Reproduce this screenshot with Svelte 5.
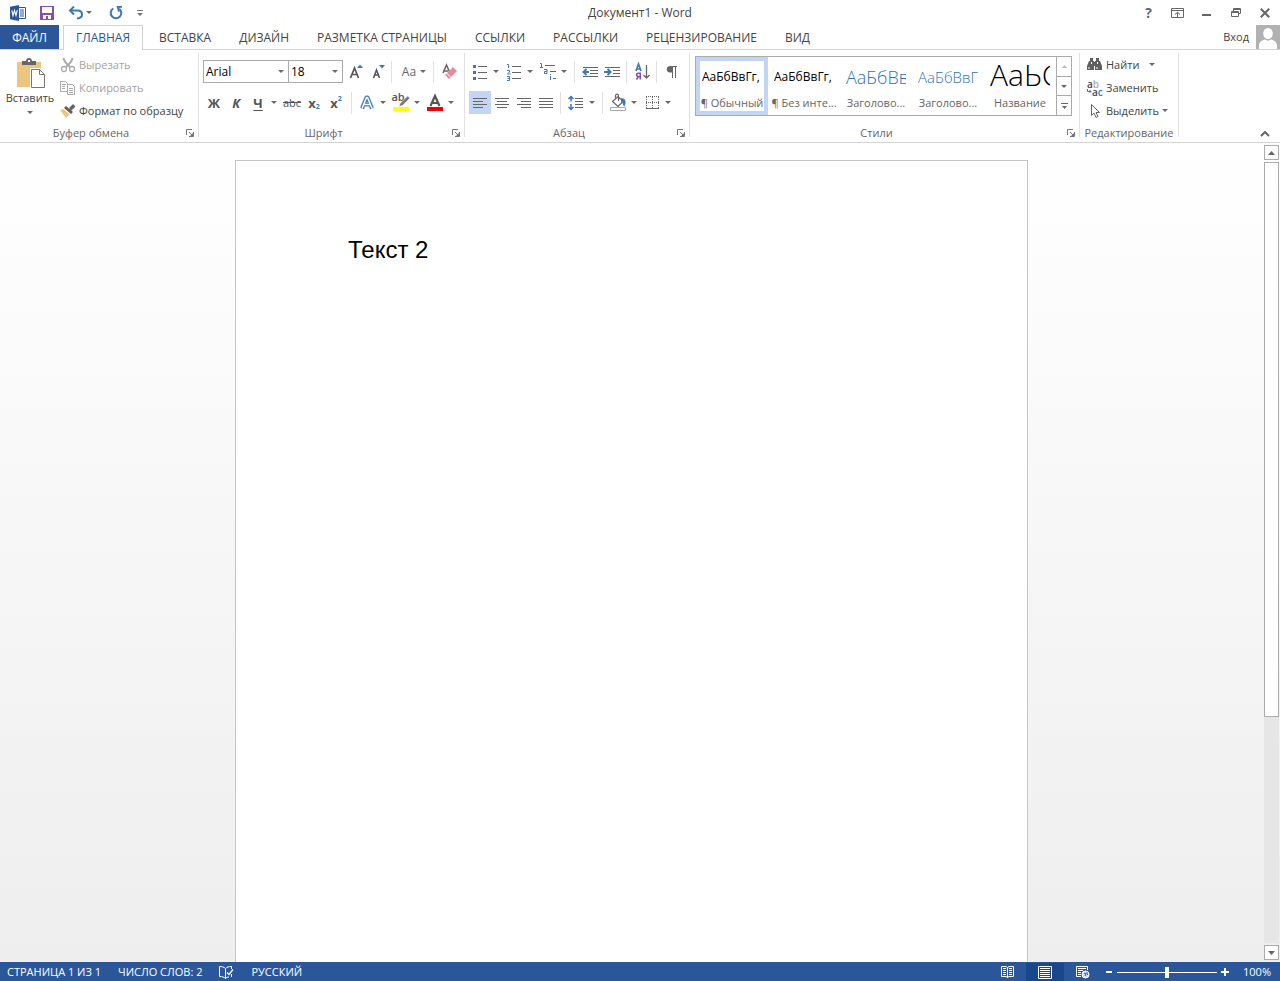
<script>
  const tabs = ['ВСТАВКА', 'ДИЗАЙН', 'РАЗМЕТКА СТРАНИЦЫ', 'ССЫЛКИ', 'РАССЫЛКИ', 'РЕЦЕНЗИРОВАНИЕ', 'ВИД'];
  const styles = [
    { sample: 'АаБбВвГг,', name: '¶ Обычный', kind: 'normal' },
    { sample: 'АаБбВвГг,', name: '¶ Без инте...', kind: 'normal' },
    { sample: 'АаБбВв', name: 'Заголово...', kind: 'h1' },
    { sample: 'АаБбВвГ', name: 'Заголово...', kind: 'h2' },
    { sample: 'АаЬС', name: 'Название', kind: 'title' }
  ];
  let current = $state(0);
  let zoom = $state(100);
</script>

{#snippet caret()}
  <svg class="caret" width="6" height="3" viewBox="0 0 6 3" aria-hidden="true"><path d="M0 0h6L3 3z" fill="#6a6a6a" /></svg>
{/snippet}

{#snippet more(label)}
  <button class="more" aria-label={label}>{@render caret()}</button>
{/snippet}

{#snippet launcher(label)}
  <button class="launcher" aria-label={label}>
    <svg width="8" height="8" viewBox="0 0 8 8" fill="none" stroke="#777"><path d="M.5 6V.5H6M3 3l3 3M7.5 3v4.5H3" /><path d="M7 4v3H4z" fill="#777" stroke="none" /></svg>
  </button>
{/snippet}

<div class="app">
  <header class="titlebar">
    <div class="quick">
      <svg class="logo" width="16" height="16" viewBox="0 0 16 16" aria-hidden="true">
        <path d="M8 2.5h7.5v11H8" fill="#fff" stroke="#2b579a" />
        <path d="M10 5h4M10 7h4M10 9h4M10 11h4" stroke="#2b579a" />
        <path d="M0 1.8L9 0v16l-9-1.8z" fill="#2b579a" />
        <path d="M1.8 5.3l1.2 5.2 1.5-5 1.5 5 1.3-5.3" fill="none" stroke="#fff" stroke-width="1.1" />
      </svg>
      <button aria-label="Сохранить" class="save">
        <svg width="14" height="14" viewBox="0 0 14 14"><path d="M0 0h14v14H0z" fill="#8650a8" /><path d="M2 1h10v6H2zM3 9h8v4H8v-3H6v3H3z" fill="#fff" /></svg>
      </button>
      <button aria-label="Отменить" class="undo">
        <svg width="16" height="14" viewBox="0 0 16 14" fill="none" stroke="#3c78b4" stroke-width="2"><path d="M6 .5L2 4.500l4 4" /><path d="M2 4.500h7.5c3 0 4.500 1.500 4.500 4s-2 3.800-5 4" /></svg>
      </button>
      {@render more('Список отмены')}
      <button aria-label="Повторить" class="redo">
        <svg width="14" height="14" viewBox="0 0 14 14"><path d="M4.200 2.500A5.300 5.300 0 1 0 10.500 3" fill="none" stroke="#3c78b4" stroke-width="2" /><path d="M7.500 0H13v1.800h-2.400v4H9z" fill="#3c78b4" /></svg>
      </button>
      <button aria-label="Настройка панели" class="custom">
        <svg width="6" height="6" viewBox="0 0 6 6" fill="#777"><path d="M0 0h6v1H0zM0 3h6L3 6z" /></svg>
      </button>
    </div>
    <h1>Документ1 - Word</h1>
    <div class="window">
      <button aria-label="Справка" class="help">?</button>
      <button aria-label="Параметры отображения ленты">
        <svg width="13" height="10" viewBox="0 0 13 10" fill="none" stroke="#666"><path d="M.5.5h12v9H.5zM1 2.500h11M6.500 9V4.500M4 6.500l2.500-2.200L9 6.500" /></svg>
      </button>
      <button aria-label="Свернуть"><svg width="9" height="6" viewBox="0 0 9 6"><path d="M0 4h9v2H0z" fill="#666" /></svg></button>
      <button aria-label="Восстановить">
        <svg width="10" height="9" viewBox="0 0 10 9" fill="none" stroke="#666"><path d="M.5 3.500h7v5h-7zM.5 4.500h7M2.500 3V.5h7v5H8M2.500 1.500h7" /></svg>
      </button>
      <button aria-label="Закрыть"><svg width="10" height="10" viewBox="0 0 10 10"><path d="M.8.8l8.400 8.400M9.200.8L.8 9.200" stroke="#666" stroke-width="2" /></svg></button>
    </div>
  </header>

  <nav class="tabs">
    <button class="file">ФАЙЛ</button>
    <button class="active">ГЛАВНАЯ</button>
    {#each tabs as tab}<button>{tab}</button>{/each}
    <button class="login">Вход</button>
    <svg class="avatar" width="24" height="24" viewBox="0 0 24 24" aria-hidden="true"><path d="M0 0h24v24H0z" fill="#b1b1b1" /><ellipse cx="12" cy="8.500" rx="4.800" ry="5.500" fill="#fff" /><path d="M3 24v-3c0-4 3-6 6-6.500 2 1.500 4 1.500 6 0 3 .5 6 2.500 6 6.500v3z" fill="#fff" /></svg>
  </nav>

  <div class="ribbon">
    <section class="group clipboard">
      <div class="body">
        <button class="paste">
          <svg width="30" height="32" viewBox="0 0 30 32">
            <path d="M2 4h24v25H2z" fill="#ecc67e" />
            <path d="M7 7V3h4c0-4 6-4 6 0h4v4z" fill="#666" /><path d="M13 2h2v2h-2z" fill="#fff" />
            <path d="M15 10h10l5 6v15H15z" fill="#fff" />
            <path d="M16.500 11.500h8l5 5v13h-13zM24.500 11.500v5h5" fill="none" stroke="#777" />
          </svg>
          <span>Вставить</span>
          {@render caret()}
        </button>
        <div class="stack">
          <button class="off">
            <svg width="16" height="16" viewBox="0 0 16 16" fill="none" stroke="#ababab" stroke-width="1.300"><path d="M3.500 1c.5 3 3 6 6.500 9M12.500 1c-.5 3-3 6-6.500 9" stroke-width="2" /><circle cx="4" cy="12" r="2.500" /><circle cx="12" cy="12" r="2.500" /></svg>
            Вырезать
          </button>
          <button class="off">
            <svg width="16" height="16" viewBox="0 0 16 16" fill="#fff" stroke="#ababab"><path d="M.5 1.500h5l2 2v8h-7zM2 4.500h4M2 6.500h3M2 8.500h3" /><path d="M7.500 4.500h5l2 2v8h-7zM9 8.500h4M9 10.500h4M9 12.500h4" /></svg>
            Копировать
          </button>
          <button>
            <svg width="16" height="16" viewBox="0 0 16 16"><path d="M0 7l4-1 6 5-4 4z" fill="#ecc67e" /><path d="M4 5l2-2 7 6-2 2z" fill="#5f5f5f" /><path d="M9 5l4-4 2.500 2.500L11 8z" fill="#666" /><path d="M4.500 6.500l5 4" stroke="#fff" /></svg>
            Формат по образцу
          </button>
        </div>
      </div>
      <footer><h2>Буфер обмена</h2>{@render launcher('Параметры буфера обмена')}</footer>
    </section>

    <section class="group font">
      <div class="body rows">
        <div class="row">
          <label class="combo face"><select aria-label="Шрифт"><option>Arial</option><option>Calibri</option></select>{@render caret()}</label>
          <label class="combo size"><select aria-label="Размер шрифта"><option>18</option><option>20</option></select>{@render caret()}</label>
          <span class="gap2"></span>
          <button class="tool" aria-label="Увеличить размер"><svg width="22" height="22" viewBox="0 0 22 22"><path d="M4.500 17L8.500 7l4 10M6 13.500h5" fill="none" stroke="#555" stroke-width="1.700" /><path d="M11 7h6l-3-3.500z" fill="#3c78b4" /></svg></button>
          <button class="tool" aria-label="Уменьшить размер"><svg width="22" height="22" viewBox="0 0 22 22"><path d="M5.500 17l3-8 3 8M7 14h4" fill="none" stroke="#555" stroke-width="1.600" /><path d="M11 4h6l-3 3.500z" fill="#3c78b4" /></svg></button>
          <i class="rule close"></i>
          <button class="case">Aa {@render caret()}</button>
          <i class="rule close"></i>
          <button class="tool" aria-label="Удалить форматирование"><svg width="22" height="22" viewBox="0 0 22 22"><path d="M5 12L8.500 4l3 7M6 10h4" fill="none" stroke="#666" stroke-width="1.500" /><path d="M7 14l8-8 4 4-8 8z" fill="#ea8a99" /><path d="M8.500 12l4.500 4.500" stroke="#fff" /></svg></button>
        </div>
        <div class="row">
          <button class="tool letter">Ж</button>
          <button class="tool letter italic">К</button>
          <button class="tool letter under">Ч</button>
          {@render more('Вид подчёркивания')}
          <button class="tool strike">abc</button>
          <button class="tool letter">x<sub>2</sub></button>
          <button class="tool letter">x<sup>2</sup></button>
          <i class="rule"></i>
          <button class="tool" aria-label="Текстовые эффекты"><svg width="22" height="22" viewBox="0 0 22 22" fill="none" stroke-linejoin="round"><path d="M6 16.500l4.500-11h1l4.500 11M8 12.500h6" stroke="#c4d9ef" stroke-width="5" /><path d="M6 16.500l4.500-11h1l4.500 11M8 12.500h6" stroke="#3c78b4" stroke-width="3.600" /><path d="M6 16.500l4.500-11h1l4.500 11M8 12.500h6" stroke="#fff" stroke-width="1.500" /></svg></button>
          {@render more('Список эффектов')}
          <button class="tool mark" aria-label="Цвет выделения">ab<svg width="17" height="16" viewBox="0 0 17 16"><path d="M0 12h16v4H0z" fill="#ff0" /><path d="M7 8.500L14.500 1 17 3 9.500 10.500 6 11.500z" fill="#777" stroke="#fff" stroke-width=".6" /></svg></button>
          {@render more('Цвета выделения')}
          <button class="tool" aria-label="Цвет текста"><svg width="22" height="22" viewBox="0 0 22 22"><path d="M6.500 14L11 4l4.500 10M8.500 11h5" fill="none" stroke="#555" stroke-width="2.200" /><path d="M3 15h16v4H3z" fill="#f00000" /></svg></button>
          {@render more('Цвета текста')}
        </div>
      </div>
      <footer><h2>Шрифт</h2>{@render launcher('Параметры шрифта')}</footer>
    </section>

    <section class="group para">
      <div class="body rows">
        <div class="row">
          <button class="tool" aria-label="Маркеры"><svg width="22" height="22" viewBox="0 0 22 22"><path d="M9 5.500h9M9 11.500h9M9 17.500h9" stroke="#666" /><path d="M4 4h3v3H4zM4 10h3v3H4zM4 16h3v3H4z" fill="#3c78b4" /></svg></button>
          {@render more('Список маркеров')}
          <button class="tool" aria-label="Нумерация"><svg width="22" height="22" viewBox="0 0 22 22" fill="none"><path d="M9 5.500h9M9 11.500h9M9 17.500h9" stroke="#666" /><path d="M4 3.500h1.500V7M4 9.500h2.500v1.500l-2 2h3M4 15.500h2.500v4H4M4.500 17.500h2" stroke="#3c78b4" /></svg></button>
          {@render more('Форматы нумерации')}
          <button class="tool" aria-label="Многоуровневый список"><svg width="22" height="22" viewBox="0 0 22 22" fill="none"><path d="M8 4.500h10M13 10.500h6M16 17.500h3" stroke="#666" /><path d="M3 2.500h1.500V6M3 6.500h3M7 8.500h3v4H7.500v-2H10M13.500 15v4M13.500 13v1" stroke="#3c78b4" /></svg></button>
          {@render more('Уровни списка')}
          <i class="rule"></i>
          <button class="tool" aria-label="Уменьшить отступ"><svg width="22" height="22" viewBox="0 0 22 22" fill="none"><path d="M4 6.500h15M11 9.500h8M11 12.500h8M4 15.500h15" stroke="#666" /><path d="M10 11H5M7.500 8l-3 3 3 3" stroke="#3c78b4" stroke-width="2" /></svg></button>
          <button class="tool" aria-label="Увеличить отступ"><svg width="22" height="22" viewBox="0 0 22 22" fill="none"><path d="M4 6.500h15M12 9.500h7M12 12.500h7M4 15.500h15" stroke="#666" /><path d="M3 11h6M6.500 8l3 3-3 3" stroke="#3c78b4" stroke-width="2" /></svg></button>
          <i class="rule"></i>
          <button class="tool" aria-label="Сортировка"><svg width="22" height="22" viewBox="0 0 22 22" fill="none"><path d="M5 10l2.500-7L10 10M6 8h3" stroke="#3c78b4" stroke-width="1.600" /><path d="M9.300 18.500v-6.300H7.500c-2.500 0-2.500 3.300 0 3.300h1.800M7.500 15.500L5.500 18.500" stroke="#8650a8" stroke-width="1.600" /><path d="M15.500 4v13M12.500 14l3 3 3-3" stroke="#666" stroke-width="1.300" /></svg></button>
          <i class="rule"></i>
          <button class="tool" aria-label="Непечатаемые знаки"><svg width="22" height="22" viewBox="0 0 22 22"><path d="M10 5.500h6M11.500 5v12M14.500 5v12" stroke="#666" /><path d="M11 5H8.500a3.300 3.300 0 0 0 0 6.500H11z" fill="#666" /></svg></button>
        </div>
        <div class="row">
          <button class="tool on" aria-label="По левому краю"><svg width="22" height="22" viewBox="0 0 22 22" stroke="#666"><path d="M4 6.500h14M4 9.500h10M4 12.500h14M4 15.500h10" /></svg></button>
          <button class="tool" aria-label="По центру"><svg width="22" height="22" viewBox="0 0 22 22" stroke="#666"><path d="M4 6.500h14M6 9.500h10M4 12.500h14M6 15.500h10" /></svg></button>
          <button class="tool" aria-label="По правому краю"><svg width="22" height="22" viewBox="0 0 22 22" stroke="#666"><path d="M4 6.500h14M8 9.500h10M4 12.500h14M8 15.500h10" /></svg></button>
          <button class="tool" aria-label="По ширине"><svg width="22" height="22" viewBox="0 0 22 22" stroke="#666"><path d="M4 6.500h14M4 9.500h14M4 12.500h14M4 15.500h14" /></svg></button>
          <i class="rule"></i>
          <button class="tool" aria-label="Интервал"><svg width="22" height="22" viewBox="0 0 22 22" fill="none"><path d="M10 6.500h8M10 9.500h8M10 12.500h8M10 15.500h8" stroke="#666" /><path d="M6 4v5.500M6 12v6M3.500 7L6 4.500 8.500 7M3.500 15L6 17.500 8.500 15" stroke="#3c78b4" stroke-width="1.500" /></svg></button>
          {@render more('Интервалы')}
          <i class="rule"></i>
          <button class="tool" aria-label="Заливка"><svg width="22" height="22" viewBox="0 0 22 22"><path d="M5.500 9.500l5.500-5 5 5-5 5zM8.500 8V4c0-2.500 3-2.500 3 0v5" fill="none" stroke="#666" stroke-width="1.200" /><path d="M14 6.500c4-1 6 3 3.500 8-2-1-1-4-3.500-5z" fill="#3c78b4" /><path d="M3.500 15.500h15v3h-15z" fill="#fff" stroke="#aaa" /></svg></button>
          {@render more('Цвета заливки')}
          <button class="tool" aria-label="Границы"><svg width="22" height="22" viewBox="0 0 22 22" fill="none" stroke="#666"><path d="M5 4.500h13M5 10.500h13M5.500 5v11M11.500 5v11M17.500 5v11" stroke-dasharray="1 1" /><path d="M5 16.500h13" /></svg></button>
          {@render more('Виды границ')}
        </div>
      </div>
      <footer><h2>Абзац</h2>{@render launcher('Параметры абзаца')}</footer>
    </section>

    <section class="group styles">
      <div class="body">
        <div class="gallery">
          {#each styles as s, i}
            <button class="style" class:picked={current === i} onclick={() => (current = i)}>
              <span class="sample {s.kind}">{s.sample}</span>
              <span class="name">{s.name}</span>
            </button>
          {/each}
          <div class="scroller">
            <button aria-label="Предыдущие стили" disabled><svg width="5" height="3" viewBox="0 0 5 3"><path d="M0 3h5L2.500 0z" fill="#bbb" /></svg></button>
            <button aria-label="Следующие стили">{@render caret()}</button>
            <button aria-label="Все стили"><svg width="7" height="6" viewBox="0 0 7 6" fill="#666"><path d="M0 0h7v1H0zM1 3h5L3.500 6z" /></svg></button>
          </div>
        </div>
      </div>
      <footer><h2>Стили</h2>{@render launcher('Параметры стилей')}</footer>
    </section>

    <section class="group edit">
      <div class="body">
        <div class="stack">
          <button>
            <svg width="16" height="16" viewBox="0 0 16 16" fill="#5f5f5f"><path d="M3 1h3v3h1v9H0V9l2-5h1zM9 1h3v3h1l2 5v4H8V4h1zM6 5h3v4H6z" /><path d="M1.500 10h1v2h-1zM9.500 10h1v2h-1zM4 5h1v2H4zM10 5h1v2h-1z" fill="#fff" /></svg>
            Найти <span class="wide">{@render caret()}</span>
          </button>
          <button>
            <span class="swap" aria-hidden="true"><b>a<em>b</em></b><b class="low">a<u>c</u></b><svg width="5" height="5" viewBox="0 0 5 5" fill="none" stroke="#3c78b4"><path d="M.5 0v2.500H4M2.500 1L4 2.500 2.500 4" /></svg></span>
            Заменить
          </button>
          <button>
            <svg width="16" height="16" viewBox="0 0 16 16"><path d="M4.500 1.500v11l2.500-2.500 2 4.500 2-1-2-4h3.500z" fill="#fff" stroke="#666" /></svg>
            Выделить{@render caret()}
          </button>
        </div>
      </div>
      <footer><h2>Редактирование</h2></footer>
    </section>
    <button class="collapse" aria-label="Свернуть ленту"><svg width="10" height="6" viewBox="0 0 10 6"><path d="M1 5l4-4 4 4" fill="none" stroke="#666" stroke-width="2" /></svg></button>
  </div>

  <main class="workspace">
    <div class="canvas">
      <article class="page"><p contenteditable="true" spellcheck="false">Текст 2</p></article>
    </div>
    <div class="scrollbar">
      <button aria-label="Вверх"><svg width="7" height="4" viewBox="0 0 7 4"><path d="M0 4h7L3.500 0z" fill="#666" /></svg></button>
      <div class="track"><div class="thumb"></div></div>
      <button aria-label="Вниз"><svg width="7" height="4" viewBox="0 0 7 4"><path d="M0 0h7L3.500 4z" fill="#666" /></svg></button>
    </div>
  </main>

  <footer class="status">
    <button>СТРАНИЦА 1 ИЗ 1</button>
    <button>ЧИСЛО СЛОВ: 2</button>
    <button aria-label="Правописание"><svg width="15" height="13" viewBox="0 0 15 13" fill="none" stroke="#fff"><path d="M6.500 2.500C5 1 3 .5.5.5v10c2.500 0 4.500.5 6 2 1-1 2-1.500 3.500-1.500M6.500 2.500v10M6.500 2.500C8 1 10 .5 12.500.5V3M12.500 8v3" /><path d="M8 6.500l2 2 4-5" stroke-width="1.300" /></svg></button>
    <button>РУССКИЙ</button>
    <div class="views">
      <button aria-label="Режим чтения"><svg width="13" height="12" viewBox="0 0 13 12" fill="none" stroke="#fff"><path d="M6.500 1.500L5 .5H.5v10H5l1.500 1 1.500-1h4.500V.5H8zM6.500 1.500v10M2 2.500h3M2 4.500h3M2 6.500h3M2 8.500h3M8 2.500h3M8 4.500h3M8 6.500h3M8 8.500h3" /></svg></button>
      <button class="on" aria-label="Разметка страницы"><svg width="14" height="13" viewBox="0 0 14 13" fill="none" stroke="#fff"><path d="M.5.5h13v12H.5zM2 2.500h10M2 4.500h10M2 6.500h10M2 8.500h10M2 10.500h10" /></svg></button>
      <button aria-label="Веб-документ"><svg width="14" height="13" viewBox="0 0 14 13" fill="none" stroke="#fff"><path d="M5 10.500H.5V.5h11V4M2 2.500h8M2 4.500h5M2 6.500h3M2 8.500h3" /><circle cx="9.500" cy="8.500" r="3.500" fill="#d5e0f0" /><path d="M8 7l2 1-1 2M11 6v2l1 1" stroke="#2b579a" /></svg></button>
    </div>
    <button class="step" aria-label="Уменьшить"><svg width="7" height="8" viewBox="0 0 7 8"><path d="M0 3h6v2H0z" fill="#fff" /></svg></button>
    <input type="range" min="0" max="200" bind:value={zoom} aria-label="Масштаб" />
    <button class="step" aria-label="Увеличить"><svg width="8" height="8" viewBox="0 0 8 8"><path d="M0 3h3V0h2v3h3v2H5v3H3V5H0z" fill="#fff" /></svg></button>
    <button class="percent">{zoom}%</button>
  </footer>
</div>

<style>
  :global(body) { margin: 0; }
  .app { min-height: 100vh; display: flex; flex-direction: column; background: #fff; color: #444; font: 12px/16px "Open Sans", "Noto Sans", sans-serif; }
  .app, .app * { box-sizing: border-box; }
  button { display: flex; align-items: center; justify-content: center; margin: 0; padding: 0; border: 0; background: none; color: inherit; font: inherit; white-space: nowrap; }
  svg { display: block; flex: none; }
  h1, h2, p { margin: 0; font-weight: 400; }

  .titlebar { display: grid; grid-template-columns: 1fr auto 1fr; align-items: center; height: 25px; }
  .titlebar h1 { font-size: 12px; line-height: 24px; }
  .quick { display: flex; align-items: center; height: 22px; padding-left: 10px; }
  .save { margin-left: 14px; }
  .undo { margin-left: 14px; }
  .redo { margin-left: 13px; }
  .custom { margin-left: 14px; }
  .window { display: flex; justify-content: flex-end; height: 22px; padding-right: 1px; }
  .window button { width: 29px; }
  .help { font-size: 14px; font-weight: 700; color: #666; }

  .tabs { display: flex; height: 25px; border-bottom: 1px solid #d4d4d4; }
  .tabs button { padding: 2px 14px 0; }
  .tabs .file { width: 59px; margin-right: 4px; padding: 2px 0 0; background: #2b579a; color: #fff; }
  .tabs .active { width: 80px; height: 25px; margin-right: 2px; padding: 0; border: 1px solid #d4d4d4; border-bottom: 0; background: #fff; color: #2b579a; }
  .tabs .login { margin-left: auto; padding: 0 7px; font-size: 11px; }

  .ribbon { display: flex; height: 93px; border-bottom: 1px solid #d4d4d4; }
  .group { display: flex; flex-direction: column; flex: none; margin: 3px 0 5px; border-right: 1px solid #e1e1e1; }
  .group footer { display: flex; align-items: center; height: 8px; margin-top: auto; color: #666; }
  .group h2 { flex: 1; font-size: 11px; text-align: center; }
  .body { display: flex; }
  .clipboard { width: 199px; }
  .font { width: 266px; }
  .para { width: 225px; }
  .styles { width: 390px; }
  .edit { width: 99px; }
  .launcher { width: 16px; height: 16px; }
  .paste { flex-direction: column; justify-content: flex-start; width: 60px; padding-top: 5px; font-size: 11px; }
  .paste span { margin: 0 0 5px; }
  .stack { display: flex; flex-direction: column; }
  .stack button { height: 23px; justify-content: flex-start; gap: 3px; font-size: 11px; }
  .off { color: #a3a3a3; }

  .rows { flex-direction: column; padding: 7px 0 0 4px; gap: 8px; }
  .row { display: flex; align-items: center; height: 23px; }
  .tool { width: 22px; height: 23px; flex: none; }
  .tool.on { background: #c2d5f2; }
  .more { width: 12px; height: 22px; padding-right: 2px; flex: none; }
  .rule { width: 1px; height: 22px; margin: 0 4px; background: #e1e1e1; flex: none; }
  .rule.close { margin-left: 1px; }
  .para .rule { margin-left: 3px; }
  .combo { display: flex; align-items: center; height: 23px; border: 1px solid #ababab; padding-right: 4px; color: #000; }
  .combo select { flex: 1; min-width: 0; appearance: none; border: 0; padding: 0 2px; background: none; font: inherit; color: inherit; }
  .face { width: 86px; }
  .size { width: 54px; }
  .face + .size { border-left: 0; }
  .gap2 { width: 3px; }
  .case { gap: 4px; width: 36px; height: 22px; color: #666; }
  .letter { font-size: 13px; font-weight: 700; color: #555; }
  .italic { font-style: italic; }
  .under { text-decoration: underline; text-underline-offset: 2px; }
  .strike { font-size: 11px; text-decoration: line-through; color: #555; }
  .letter sub, .letter sup { font-size: 7px; line-height: 8px; color: #3c78b4; }
  .letter sub { align-self: flex-end; margin-bottom: 3px; }
  .letter sup { align-self: flex-start; margin-top: 4px; }
  .mark { position: relative; align-items: flex-start; padding-right: 6px; font-size: 11px; font-weight: 600; line-height: 12px; color: #555; }
  .mark svg { position: absolute; left: 3px; top: 4px; }

  .styles .body { padding: 3px 7px 0 5px; }
  .gallery { display: flex; flex: 1; height: 60px; border: 1px solid #ababab; }
  .style { width: 72px; flex: none; flex-direction: column; justify-content: flex-end; padding: 0 3px 1px; border: solid transparent; border-width: 2px 1px; overflow: hidden; }
  .picked { border: 4px solid #c2d5f2; padding: 0; }
  .picked .name { margin-bottom: -1px; }
  .sample { width: 60px; height: 32px; line-height: 30px; overflow: hidden; text-align: left; color: #000; }
  .sample.h1 { font-size: 18px; font-weight: 300; color: #2e74b5; }
  .sample.h2 { font-size: 15px; font-weight: 300; color: #2e74b5; }
  .sample.title { font-size: 30px; font-weight: 300; line-height: 26px; }
  .name { font-size: 11px; line-height: 18px; color: #666; }
  .scroller { display: flex; flex-direction: column; width: 15px; margin-left: auto; border-left: 1px solid #ababab; }
  .scroller button { flex: 1; }
  .scroller button + button { border-top: 1px solid #ababab; }
  .edit .body { padding-left: 7px; }
  .wide { padding-left: 7px; }
  .swap { position: relative; display: grid; width: 16px; height: 16px; font-size: 10px; line-height: 8px; text-align: left; }
  .swap b { font-weight: 600; }
  .swap em { font-style: normal; color: #aaa; }
  .swap u { text-decoration: none; color: #3c78b4; }
  .swap .low { padding-left: 5px; }
  .swap svg { position: absolute; left: 0; bottom: 2px; }
  .collapse { align-self: flex-end; margin: 0 10px 5px auto; }

  .workspace { flex: 1; display: flex; background: linear-gradient(#fff, #eee); }
  .canvas { flex: 1; display: flex; justify-content: center; padding-top: 17px; }
  .page { width: 793px; padding: 73px 112px; border: 1px solid #c6c6c6; border-bottom: 0; background: #fff; }
  .page p { font: 24px/32px "Liberation Sans", Arial, sans-serif; color: #000; }
  .scrollbar { display: flex; flex-direction: column; gap: 2px; width: 17px; padding: 2px 1px; }
  .scrollbar button { height: 15px; border: 1px solid #ababab; background: #fff; }
  .track { flex: 1; background: #e6e6e6; }
  .thumb { height: 71%; border: 1px solid #ababab; background: #fff; }

  .status { display: flex; align-items: center; height: 19px; padding: 1px 9px 0 7px; background: #2b579a; color: #fff; font-size: 11px; }
  .status > button { margin-right: 17px; }
  .views { display: flex; margin-left: auto; align-self: stretch; }
  .views button { width: 38px; }
  .views .on { background: #19478a; }
  .status .step { margin: 0 4px; }
  .status .percent { width: 34px; margin: 0 0 0 4px; justify-content: flex-end; }
  input { appearance: none; width: 100px; height: 11px; margin: 0; background: linear-gradient(#fff, #fff) center / 100% 1px no-repeat; }
  input::-webkit-slider-thumb { appearance: none; width: 4px; height: 11px; background: #fff; }
</style>
